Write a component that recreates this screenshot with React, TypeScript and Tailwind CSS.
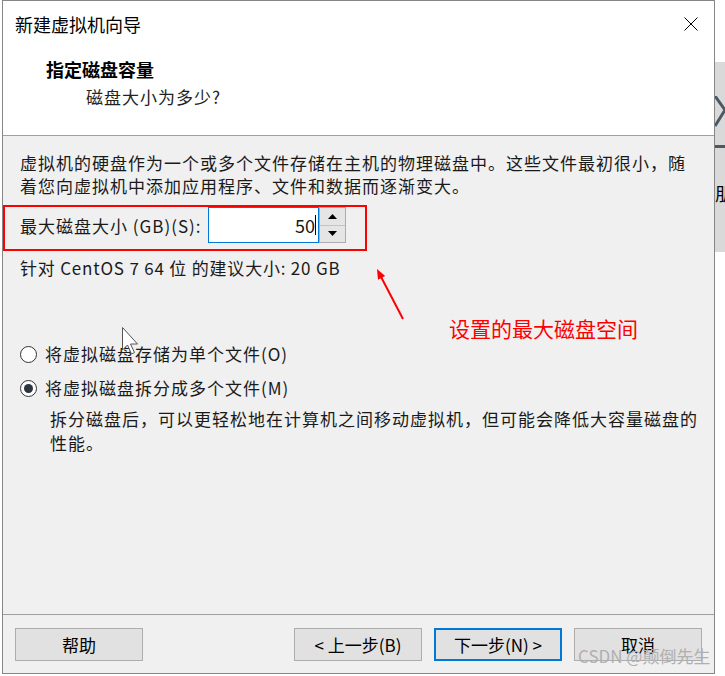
import React from "react"

function Radio({ checked }: { checked?: boolean }) {
  return (
    <span className="w-[17px] h-[17px] rounded-full border border-[#333333] bg-white flex items-center justify-center shrink-0">
      {checked && <span className="w-[9px] h-[9px] rounded-full bg-[#2b3641]" />}
    </span>
  )
}

function WizardButton({ label, primary }: { label: string; primary?: boolean }) {
  return (
    <div
      className={
        primary
          ? "w-[128px] h-[33px] border-2 border-[#0078d7] bg-[#e1e1e1] flex items-center justify-center text-[17px]"
          : "w-[128px] h-[33px] border border-[#adadad] bg-[#e1e1e1] flex items-center justify-center text-[17px]"
      }
    >
      {label}
    </div>
  )
}

export default function App() {
  return (
    <div className="relative w-[725px] h-[676px] bg-white flex font-['Noto_Sans_CJK_SC','Noto_Sans',sans-serif] text-black overflow-hidden">
      {/* dialog */}
      <div className="ml-[2px] w-[713px] h-[674px] border border-[#868686] flex flex-col">
        {/* header */}
        <div className="h-[134px] bg-white border-b border-[#a0a0a0] box-content">
          <div className="h-[46px] flex items-center justify-between pl-[12px] pr-[16px]">
            <span className="text-[18px] leading-[24px]">新建虚拟机向导</span>
            <svg width="14" height="14" viewBox="0 0 14 14">
              <path d="M0.5 0.5 L13.5 13.5 M13.5 0.5 L0.5 13.5" stroke="#000" strokeWidth="1" />
            </svg>
          </div>
          <div className="mt-[10px] pl-[43px] text-[18px] leading-[24px] font-bold">指定磁盘容量</div>
          <div className="mt-[4px] pl-[83px] text-[17px] leading-[24px] tracking-[1px] text-[#222]">磁盘大小为多少?</div>
        </div>

        {/* body */}
        <div className="flex-1 bg-[#f0f0f0] border-b border-[#a0a0a0] pt-[15px] text-[17px] tracking-[1px] text-[#1a1a1a]">
          <div className="pl-[17px] leading-[23px]">
            <div>虚拟机的硬盘作为一个或多个文件存储在主机的物理磁盘中。这些文件最初很小，随</div>
            <div>着您向虚拟机中添加应用程序、文件和数据而逐渐变大。</div>
          </div>

          <div className="mt-[8px] w-[364px] h-[46px] border-2 border-[#ff0000] flex items-start">
            <div className="h-[36px] flex items-center pl-[15px]">
              <span className="w-[188px] shrink-0 leading-[23px] tracking-[1px]">最大磁盘大小 (GB)(S):</span>
              <div className="w-[111px] h-[36px] border border-[#0078d7] bg-white flex items-center justify-end pr-[2px] tracking-normal">
                <span className="text-[18px] leading-[20px]">50</span>
                <span className="w-px h-[20px] bg-black" />
              </div>
              <div className="w-[27px] h-[36px] border border-[#adadad] bg-[#e5e5e5] flex flex-col">
                <div className="flex-1 border-b border-[#c4c4c4] flex items-center justify-center">
                  <svg width="9" height="5" viewBox="0 0 9 5"><path d="M4.5 0 L9 5 L0 5 Z" fill="#000" /></svg>
                </div>
                <div className="flex-1 flex items-center justify-center">
                  <svg width="9" height="5" viewBox="0 0 9 5"><path d="M0 0 L9 0 L4.5 5 Z" fill="#000" /></svg>
                </div>
              </div>
            </div>
          </div>

          <div className="mt-[5px] pl-[17px] leading-[23px] tracking-[0.8px]">针对 CentOS 7 64 位 的建议大小: 20 GB</div>

          <div className="mt-[63px] pl-[17px] h-[24px] flex items-center gap-[8px]">
            <Radio />
            <span className="leading-[24px]">将虚拟磁盘存储为单个文件(O)</span>
          </div>
          <div className="mt-[10px] pl-[17px] h-[24px] flex items-center gap-[8px]">
            <Radio checked />
            <span className="leading-[24px]">将虚拟磁盘拆分成多个文件(M)</span>
          </div>
          <div className="mt-[7px] pl-[47px] leading-[24px]">
            <div>拆分磁盘后，可以更轻松地在计算机之间移动虚拟机，但可能会降低大容量磁盘的</div>
            <div>性能。</div>
          </div>
        </div>

        {/* footer */}
        <div className="h-[58px] bg-[#f0f0f0] px-[12px] pt-[13px] flex items-start">
          <WizardButton label="帮助" />
          <div className="ml-auto flex gap-[12px]">
            <WizardButton label="< 上一步(B)" />
            <WizardButton label="下一步(N) >" primary />
            <WizardButton label="取消" />
          </div>
        </div>
      </div>

      {/* desktop strip behind the dialog */}
      <div className="w-[10px]">
        <div className="mt-[62px] h-[190px] bg-[#d9d9d9] relative overflow-hidden">
          <svg className="absolute left-0 top-[34px]" width="10" height="54" viewBox="0 0 10 54">
            <path d="M0 0 L10 14 L0 30" stroke="#4b5963" strokeWidth="3" fill="none" />
            <rect x="0" y="49" width="10" height="3" fill="#4b5963" />
          </svg>
          <span className="absolute left-0 top-[119px] text-[18px] leading-[24px]">朋</span>
        </div>
      </div>

      {/* annotations */}
      <svg className="absolute left-[370px] top-[262px]" width="40" height="64" viewBox="0 0 40 64">
        <path d="M33 57 L9 11" stroke="#ff0000" strokeWidth="2" />
        <path d="M7 7 L15.2 14.1 L8 17.7 Z" fill="#ff0000" />
      </svg>
      <span className="absolute left-[449px] top-[314px] text-[21px] leading-[28px] text-[#ff0000]">设置的最大磁盘空间</span>

      <svg className="absolute left-[122px] top-[327px]" width="18" height="30" viewBox="0 0 18 30">
        <path d="M0.5 0.5 L0.5 23 L5.5 18 L9.5 27 L12.5 25.5 L8.5 17 L15.5 17 Z" fill="#fff" stroke="#555" strokeWidth="1" />
      </svg>

      <span className="absolute left-[578px] top-[644px] text-[17px] leading-[24px] text-[#b0b0b0]">CSDN @颠倒先生</span>
    </div>
  )
}
